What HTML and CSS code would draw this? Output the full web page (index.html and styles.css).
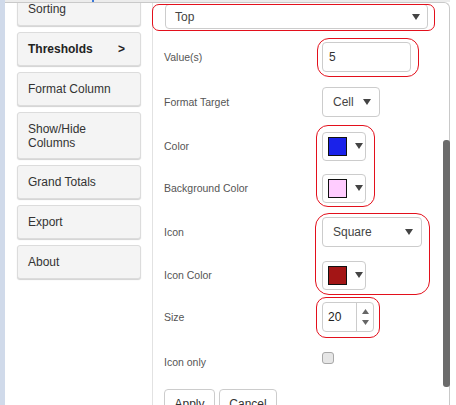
FILE: index.html
```html
<!DOCTYPE html>
<html>
<head>
<meta charset="utf-8">
<link rel="stylesheet" href="styles.css">
</head>
<body>
<div class="screen">
  <div class="rail"></div>
  <div class="main">
    <div class="topgap"><span class="tick"></span></div>
    <div class="frame">
      <aside class="sidebar">
        <div class="navbtn first">Sorting</div>
        <div class="navbtn active"><span>Thresholds</span><span>&gt;</span></div>
        <div class="navbtn">Format Column</div>
        <div class="navbtn tall">Show/Hide<br>Columns</div>
        <div class="navbtn">Grand Totals</div>
        <div class="navbtn">Export</div>
        <div class="navbtn">About</div>
      </aside>
      <main class="panel">
        <div class="select wide"><span>Top</span><svg class="caret" width="8" height="6" viewBox="0 0 8 6"><polygon points="0,0 8,0 4,6" fill="#444"/></svg></div>
        <div class="form">
          <div class="row">
            <label class="lbl">Value(s)</label>
            <div class="input value">5</div>
          </div>
          <div class="row">
            <label class="lbl">Format Target</label>
            <div class="select small"><span>Cell</span><svg class="caret" width="8" height="6" viewBox="0 0 8 6"><polygon points="0,0 8,0 4,6" fill="#444"/></svg></div>
          </div>
          <div class="row">
            <label class="lbl">Color</label>
            <div class="colorpick"><span class="swatch blue"></span><svg class="caret" width="8" height="6" viewBox="0 0 8 6"><polygon points="0,0 8,0 4,6" fill="#444"/></svg></div>
          </div>
          <div class="row">
            <label class="lbl">Background Color</label>
            <div class="colorpick"><span class="swatch pink"></span><svg class="caret" width="8" height="6" viewBox="0 0 8 6"><polygon points="0,0 8,0 4,6" fill="#444"/></svg></div>
          </div>
          <div class="row">
            <label class="lbl">Icon</label>
            <div class="select medium"><span>Square</span><svg class="caret" width="8" height="6" viewBox="0 0 8 6"><polygon points="0,0 8,0 4,6" fill="#444"/></svg></div>
          </div>
          <div class="row">
            <label class="lbl">Icon Color</label>
            <div class="colorpick"><span class="swatch red"></span><svg class="caret" width="8" height="6" viewBox="0 0 8 6"><polygon points="0,0 8,0 4,6" fill="#444"/></svg></div>
          </div>
          <div class="row">
            <label class="lbl">Size</label>
            <div class="number">
              <span class="numval">20</span>
              <span class="spin">
                <svg width="7" height="5" viewBox="0 0 7 5"><polygon points="0,5 7,5 3.5,0" fill="#666"/></svg>
                <svg width="7" height="5" viewBox="0 0 7 5"><polygon points="0,0 7,0 3.5,5" fill="#666"/></svg>
              </span>
            </div>
          </div>
          <div class="row">
            <label class="lbl low">Icon only</label>
            <span class="checkbox"></span>
          </div>
          <div class="actions">
            <div class="btn">Apply</div>
            <div class="btn">Cancel</div>
          </div>
        </div>
      </main>
    </div>
  </div>
  <div class="thumb"></div>
  <div class="mark m1"></div>
  <div class="mark m2"></div>
  <div class="mark m3"></div>
  <div class="mark m4"></div>
  <div class="mark m5"></div>
</div>
</body>
</html>
```

FILE: styles.css
```css
* { box-sizing: border-box; }
html, body { margin: 0; padding: 0; background: #fff; }
body { font-family: "Liberation Sans", Arial, sans-serif; }

.screen {
  position: relative;
  width: 456px;
  height: 405px;
  overflow: hidden;
  display: flex;
}
.rail { width: 5px; flex: none; background: #d0daea; }
.main { width: 445px; flex: none; display: flex; flex-direction: column; }
.topgap { position: relative; height: 2px; flex: none; background: #ececec; }
.tick { position: absolute; left: 87px; top: 0; width: 2px; height: 2px; background: #3a78d8; }
.frame {
  flex: 1;
  display: flex;
  border-top: 1px solid #c9c9c9;
  border-right: 1px solid #c9c9c9;
  border-top-right-radius: 6px;
  overflow: hidden;
}

.sidebar {
  width: 148px;
  flex: none;
  border-right: 1px solid #e2e2e2;
  padding-left: 12px;
}
.navbtn {
  width: 124px;
  height: 34px;
  margin-bottom: 6px;
  background: #f4f4f4;
  border: 1px solid #dcdcdc;
  border-radius: 3px;
  box-shadow: 0 1px 1px rgba(0,0,0,0.18);
  font-size: 12px;
  color: #333;
  padding: 0 15px 0 10px;
  display: flex;
  align-items: center;
  justify-content: space-between;
}
.navbtn.first { margin-top: -11px; }
.navbtn.active { font-weight: bold; color: #222; }
.navbtn.tall { height: 47px; line-height: 14px; }

.panel {
  flex: 1;
  padding-left: 11px;
  color: #555;
}
.select, .input, .colorpick, .number, .btn {
  background: #fff;
  border: 1px solid #cccccc;
  border-radius: 4px;
}
.select {
  display: flex;
  align-items: center;
  justify-content: space-between;
  font-size: 12px;
  color: #444;
}
.select.wide {
  margin-top: 1px;
  margin-left: 1px;
  width: 263px;
  height: 25px;
  padding: 0 7px 0 9px;
}
.select.small { width: 58px; height: 30px; padding: 0 8px 0 10px; }
.select.medium { width: 100px; height: 30px; padding: 0 8px 0 10px; }
.caret { display: block; }

.form {
  margin-top: 13px;
  display: grid;
  grid-template-rows: 45px 44px 42px 44px 43px 42px 42px 45px 30px;
}
.row { display: flex; align-items: center; height: 30px; }
.lbl { width: 158px; flex: none; font-size: 10.5px; color: #555; }
.lbl.low { margin-top: 5px; }

.input.value {
  width: 89px;
  height: 30px;
  font-size: 12px;
  color: #333;
  padding-left: 6px;
  display: flex;
  align-items: center;
}

.colorpick {
  width: 44px;
  height: 29px;
  display: flex;
  align-items: center;
  padding-left: 5px;
  gap: 8px;
}
.swatch { width: 19px; height: 19px; border: 1px solid #111; }
.swatch.blue { background: #1a22ea; }
.swatch.pink { background: #ffccff; }
.swatch.red { background: #a31515; }

.number {
  width: 52px;
  height: 30px;
  display: flex;
  font-size: 12px;
  color: #222;
}
.numval { width: 34px; padding-left: 5px; display: flex; align-items: center; border-right: 1px solid #cccccc; }
.spin { flex: 1; display: flex; flex-direction: column; align-items: center; justify-content: space-around; padding: 3px 0; }
.spin svg { display: block; }

.checkbox {
  width: 12px;
  height: 12px;
  margin-top: -3px;
  background: #e6e6e6;
  border: 1px solid #a8a8a8;
  border-radius: 3px;
}

.actions { display: flex; gap: 4px; }
.btn {
  height: 30px;
  padding: 0 11px;
  display: flex;
  align-items: center;
  font-size: 12px;
  color: #333;
}
.btn:first-child { width: 51px; justify-content: center; padding: 0; }
.btn:last-child { width: 58px; justify-content: center; padding: 0; }

.thumb {
  position: absolute;
  left: 443px;
  top: 140px;
  width: 7px;
  height: 247px;
  background: #6b6b6b;
  border-radius: 3px;
}

.mark {
  position: absolute;
  border: 1px solid #e3101c;
}
.m1 { left: 152px; top: 4px; width: 283px; height: 27px; border-radius: 7px; }
.m2 { left: 317px; top: 38px; width: 102px; height: 39px; border-radius: 12px; }
.m3 { left: 316px; top: 125px; width: 59px; height: 82px; border-radius: 12px; }
.m4 { left: 315px; top: 213px; width: 115px; height: 82px; border-radius: 14px; }
.m5 { left: 316px; top: 297px; width: 64px; height: 41px; border-radius: 10px; }
```
